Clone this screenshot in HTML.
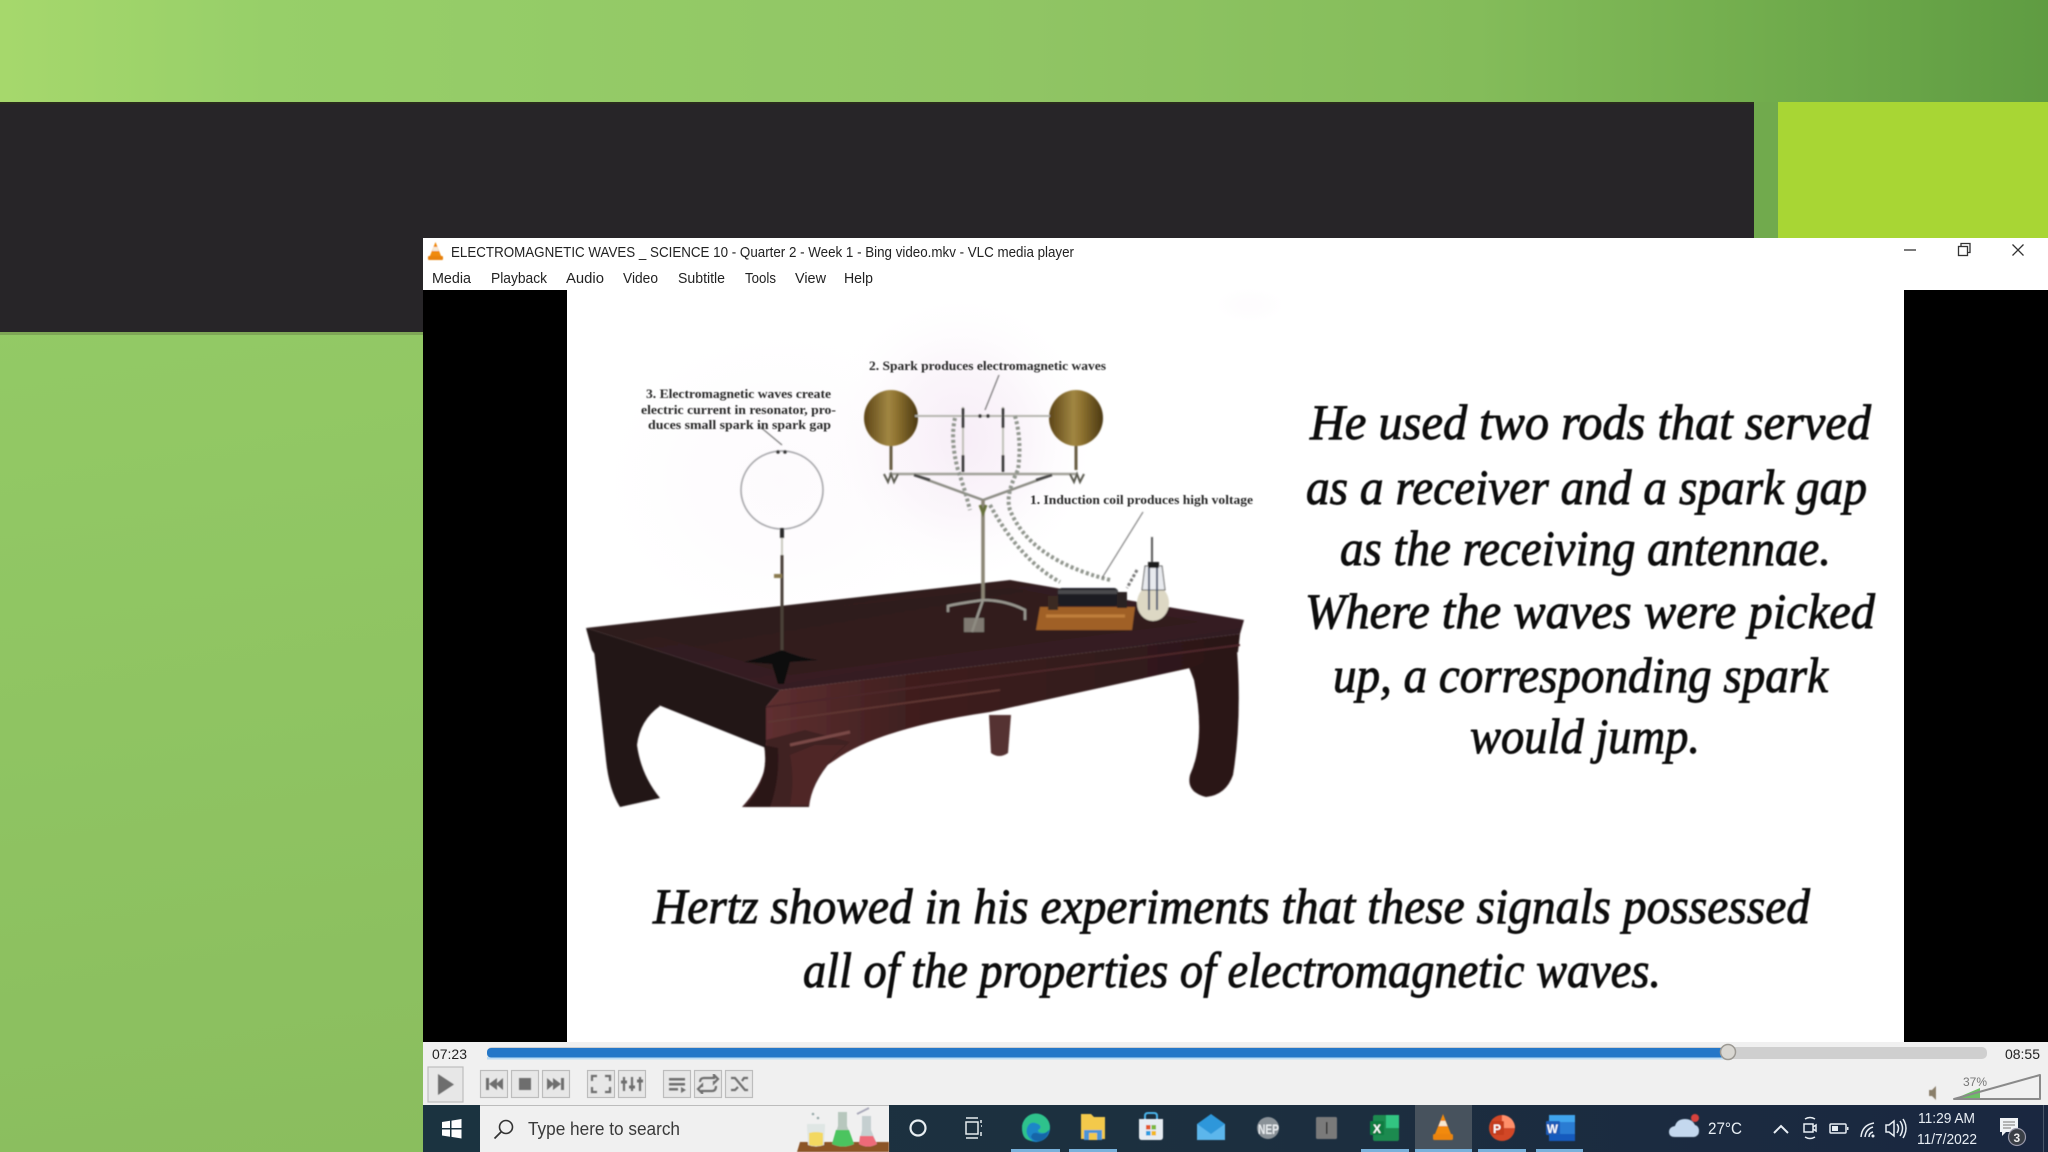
<!DOCTYPE html>
<html lang="en">
<head>
<meta charset="utf-8">
<title>VLC media player</title>
<style>
html,body{margin:0;padding:0;width:2048px;height:1152px;overflow:hidden;background:#90c864}
svg{display:block}
.ui{font-family:"Liberation Sans",sans-serif}
.sc{font-family:"Liberation Serif",serif;font-style:italic;fill:#111;stroke:#111;stroke-width:.9px;font-size:50px}
.lb{font-family:"Liberation Serif",serif;font-weight:bold;fill:#2a2a2a;font-size:12.5px}
</style>
</head>
<body>
<svg width="2048" height="1152" viewBox="0 0 2048 1152" xmlns="http://www.w3.org/2000/svg">
<defs>
<linearGradient id="top" x1="0" y1="0" x2="1" y2="0">
<stop offset="0" stop-color="#a6d86c"/><stop offset=".13" stop-color="#97cf69"/><stop offset=".5" stop-color="#90c564"/><stop offset=".72" stop-color="#84bc5a"/><stop offset=".85" stop-color="#73ae4e"/><stop offset="1" stop-color="#5f9c42"/>
</linearGradient>
<linearGradient id="left" x1="0" y1="0" x2="0.3" y2="1">
<stop offset="0" stop-color="#96ce68"/><stop offset="1" stop-color="#8abd5e"/>
</linearGradient>
<linearGradient id="tb" x1="0" y1="0" x2="1" y2="0">
<stop offset="0" stop-color="#1b3340"/><stop offset=".5" stop-color="#1c2f3f"/><stop offset="1" stop-color="#1a2740"/>
</linearGradient>
<linearGradient id="ball" x1="0" y1="0" x2="1" y2="0">
<stop offset="0" stop-color="#5c4416"/><stop offset=".45" stop-color="#a08642"/><stop offset=".6" stop-color="#8f7330"/><stop offset="1" stop-color="#4a3812"/>
</linearGradient>
<linearGradient id="ttop" x1="0" y1="0" x2="1" y2="1">
<stop offset="0" stop-color="#271a1b"/><stop offset=".6" stop-color="#371f22"/><stop offset="1" stop-color="#2a1a1b"/>
</linearGradient>
<linearGradient id="apr" x1="0" y1="0" x2="1" y2="0">
<stop offset="0" stop-color="#5f2f30"/><stop offset=".3" stop-color="#3f1f1f"/><stop offset="1" stop-color="#2a1718"/>
</linearGradient>
<radialGradient id="lil" cx=".5" cy=".5" r=".5">
<stop offset="0" stop-color="#f7edf7"/><stop offset=".5" stop-color="#fbf6fb"/><stop offset="1" stop-color="#fff" stop-opacity="0"/>
</radialGradient>
<filter id="b1" x="-5%" y="-5%" width="110%" height="110%"><feGaussianBlur stdDeviation=".7"/></filter>
<filter id="b2" x="-5%" y="-5%" width="110%" height="110%"><feGaussianBlur stdDeviation=".45"/></filter>
</defs>

<!-- slide background -->
<rect width="2048" height="1152" fill="url(#left)"/>
<rect width="2048" height="102" fill="url(#top)"/>
<rect x="1754" y="102" width="24" height="136" fill="#71aa4d"/>
<rect x="1778" y="102" width="270" height="136" fill="#a8d634"/>
<rect x="0" y="102" width="1754" height="230" fill="#272528"/>
<rect x="0" y="102" width="1754" height="2" fill="#2a2d1e"/>
<rect x="0" y="332" width="423" height="3" fill="#7ea656"/>

<!-- window -->
<rect x="423" y="238" width="1625" height="52" fill="#fff"/>
<rect x="423" y="290" width="1625" height="752" fill="#000"/>
<rect x="567" y="290" width="1337" height="752" fill="#fff"/>
<rect x="423" y="1042" width="1625" height="63" fill="#f0f0f0"/>

<!-- title icon -->
<g filter="url(#b2)">
<path d="M435.500 242l6 15h-12z" fill="#f08a10"/>
<path d="M433.500 247h4l1.300 4h-6.600z" fill="#f4e9d8"/>
<rect x="428" y="256" width="15" height="4" rx="1" fill="#e8820c"/>
</g>
<g class="ui" fill="#222" font-size="14.500">
<text x="451" y="257" textLength="623" lengthAdjust="spacingAndGlyphs">ELECTROMAGNETIC WAVES _ SCIENCE 10 - Quarter 2 - Week 1 - Bing video.mkv - VLC media player</text>
<text x="432" y="283" textLength="39" lengthAdjust="spacingAndGlyphs">Media</text>
<text x="491" y="283" textLength="56" lengthAdjust="spacingAndGlyphs">Playback</text>
<text x="566" y="283" textLength="38" lengthAdjust="spacingAndGlyphs">Audio</text>
<text x="623" y="283" textLength="35" lengthAdjust="spacingAndGlyphs">Video</text>
<text x="678" y="283" textLength="47" lengthAdjust="spacingAndGlyphs">Subtitle</text>
<text x="745" y="283" textLength="31" lengthAdjust="spacingAndGlyphs">Tools</text>
<text x="795" y="283" textLength="31" lengthAdjust="spacingAndGlyphs">View</text>
<text x="844" y="283" textLength="29" lengthAdjust="spacingAndGlyphs">Help</text>
</g>
<!-- window buttons -->
<g fill="none" stroke="#333" stroke-width="1.300">
<path d="M1904 250h12"/>
<rect x="1958.500" y="246.500" width="9" height="9"/>
<path d="M1961 246.500v-3h9v9h-2.500"/>
<path d="M2012.500 244.500l11 11M2023.500 244.500l-11 11"/>
</g>

<!-- video picture -->
<ellipse cx="960" cy="440" rx="140" ry="150" fill="url(#lil)"/>
<ellipse cx="780" cy="480" rx="200" ry="170" fill="url(#lil)" opacity=".25"/>
<ellipse cx="1250" cy="305" rx="40" ry="20" fill="url(#lil)" opacity=".2"/>
<g filter="url(#b1)">
<!-- back leg -->
<path d="M989 715h22l-3 38q-9 6-17 0z" fill="#553230"/>
<!-- left leg -->
<path d="M594 650L606 760Q609 790 620 807L660 798Q641 775 637 745Q640 720 660 706Z" fill="#241416"/>
<!-- right leg -->
<path d="M1237 650Q1242 720 1233 775Q1226 795 1206 797Q1186 792 1190 775Q1206 740 1194 680L1186 660Z" fill="#2a1719"/>
<!-- under front apron -->
<path d="M766 707L780 690L1240 634L1238 652L1190 668L990 712Q880 728 835 760L790 790L766 748Z" fill="url(#apr)"/>
<!-- front leg -->
<path d="M766 740Q772 775 742 807H809Q812 775 850 742L805 730Z" fill="#3f2022"/>
<path d="M764 745Q770 780 745 807H770Q780 780 778 748Z" fill="#2a1516"/>
<path d="M790 755Q795 780 790 805H809Q812 775 845 745L815 745Z" fill="#4f2728"/>
<!-- left apron -->
<path d="M586 628L780 690L766 707L766 748L646 700L600 662L592 650Z" fill="#211315"/>
<!-- top -->
<path d="M586 628L1010 580L1244 620L1240 634L780 690Z" fill="url(#ttop)"/>
<path d="M638 630L1010 588L1200 622L790 675Z" fill="#301a1d" opacity=".8"/>
<path d="M766 707L1240 645" stroke="#4e2829" stroke-width="2" fill="none"/>
<path d="M768 722L1000 690" stroke="#5e3432" stroke-width="2" fill="none"/>
<path d="M790 745L850 732" stroke="#7a4a46" stroke-width="3" fill="none"/>

<!-- ring -->
<ellipse cx="782" cy="490" rx="41" ry="39" fill="none" stroke="#9a9a9e" stroke-width="1.400"/>
<rect x="780" y="528" width="4" height="10" fill="#2a2a2a"/>
<path d="M782 538V680" stroke="#c9c9c0" stroke-width="2"/>
<path d="M782 555V680" stroke="#4a4038" stroke-width="3"/>
<rect x="774" y="574" width="8" height="4" fill="#8a7a50"/>
<path d="M744 662Q770 655 782 650Q800 658 818 660L790 662L784 684L778 684L772 664Z" fill="#0f0a0a"/>
<path d="M782 445L758 425" stroke="#555" stroke-width="1"/>
<circle cx="778" cy="452" r="1.800" fill="#333"/><circle cx="785" cy="452" r="1.800" fill="#333"/>

<!-- spark apparatus -->
<ellipse cx="891" cy="418" rx="27" ry="28" fill="url(#ball)"/>
<ellipse cx="1076" cy="418" rx="27" ry="28" fill="url(#ball)"/>
<path d="M915 416H1050" stroke="#b5b5ae" stroke-width="2"/>
<path d="M891 446V470M1076 446V470" stroke="#665b40" stroke-width="3"/>
<path d="M889 474H1077" stroke="#a0a098" stroke-width="2.500"/>
<path d="M884 474l4 8 3-8 3 8 4-8M1070 474l4 8 3-8 3 8 4-8" stroke="#5a5a50" stroke-width="2" fill="none"/>
<path d="M963 407V472M1003 407V472" stroke="#c0c0b8" stroke-width="2"/>
<path d="M963 408V428M1003 408V428M963 455V472M1003 455V472" stroke="#333" stroke-width="2.500"/>
<circle cx="980" cy="416" r="1.800" fill="#333"/><circle cx="988" cy="416" r="1.800" fill="#333"/>
<path d="M914 475L983 500L1052 475" fill="none" stroke="#8c8c84" stroke-width="2.500"/>
<path d="M914 475L930 480M1036 480L1052 475" stroke="#444" stroke-width="2.500"/>
<path d="M983 500V600" stroke="#8a8474" stroke-width="3.500"/>
<path d="M980 505l3 8 3-8" stroke="#66703a" stroke-width="3" fill="none"/>
<path d="M983 600Q955 604 948 606V612M983 600Q1005 600 1025 610V620M983 600L972 632" stroke="#9a9890" stroke-width="2.500" fill="none"/>
<rect x="964" y="618" width="20" height="14" fill="#8d8a80" opacity=".85"/>
<path d="M955 418Q950 440 958 470Q965 490 970 510" fill="none" stroke="#8f948c" stroke-width="4" stroke-dasharray="3 2.500"/>
<path d="M1015 416Q1022 440 1018 470Q1005 495 1010 510Q1030 560 1110 580" fill="none" stroke="#8f948c" stroke-width="4" stroke-dasharray="3 2.500"/>
<path d="M990 505Q1020 560 1060 582" fill="none" stroke="#8f948c" stroke-width="4" stroke-dasharray="3 2.500"/>
<!-- induction coil -->
<path d="M1040 607L1135 607L1132 630L1036 630Z" fill="#a06028"/>
<path d="M1046 616H1125" stroke="#c07f3a" stroke-width="3"/>
<rect x="1058" y="588" width="60" height="18" rx="4" fill="#1f1f22"/>
<rect x="1058" y="590" width="60" height="4" fill="#4a4a4e"/>
<rect x="1048" y="596" width="10" height="14" fill="#3b2a20"/>
<rect x="1117" y="592" width="10" height="16" fill="#2b2420"/>
<!-- leyden jar -->
<ellipse cx="1153" cy="603" rx="16" ry="18" fill="#ddd8c4"/>
<path d="M1145 566H1162L1165 590H1142Z" fill="#e8eaee" stroke="#555" stroke-width="1"/>
<path d="M1152 537V566" stroke="#555" stroke-width="2"/>
<rect x="1148" y="562" width="11" height="6" fill="#1a1a1a"/>
<path d="M1149 568V610M1157 568V610" stroke="#4a5670" stroke-width="2"/>
<path d="M1137 570L1127 588" stroke="#777" stroke-width="3" stroke-dasharray="3 2"/>
<!-- arrows -->
<path d="M999 375L985 410" stroke="#555" stroke-width="1"/>
<path d="M1143 512L1102 578" stroke="#666" stroke-width="1"/>
</g>
<g filter="url(#b2)">
<text class="lb" x="869" y="370" textLength="237" lengthAdjust="spacingAndGlyphs">2. Spark produces electromagnetic waves</text>
<text class="lb" x="646" y="398" textLength="185" lengthAdjust="spacingAndGlyphs">3. Electromagnetic waves create</text>
<text class="lb" x="641" y="414" textLength="195" lengthAdjust="spacingAndGlyphs">electric current in resonator, pro-</text>
<text class="lb" x="648" y="429" textLength="183" lengthAdjust="spacingAndGlyphs">duces small spark  in spark gap</text>
<text class="lb" x="1030" y="504" textLength="223" lengthAdjust="spacingAndGlyphs">1. Induction coil produces high voltage</text>
</g>
<g filter="url(#b2)">
<text class="sc" x="1310" y="439" textLength="561" lengthAdjust="spacingAndGlyphs">He used two rods that served</text>
<text class="sc" x="1306" y="504" textLength="561" lengthAdjust="spacingAndGlyphs">as a receiver and a spark gap</text>
<text class="sc" x="1340" y="565" textLength="491" lengthAdjust="spacingAndGlyphs">as the receiving antennae.</text>
<text class="sc" x="1305" y="628" textLength="570" lengthAdjust="spacingAndGlyphs">Where the waves were picked</text>
<text class="sc" x="1333" y="692" textLength="495" lengthAdjust="spacingAndGlyphs">up, a corresponding spark</text>
<text class="sc" x="1470" y="753" textLength="230" lengthAdjust="spacingAndGlyphs">would jump.</text>
<text class="sc" x="653" y="923" textLength="1157" lengthAdjust="spacingAndGlyphs">Hertz showed in his experiments that these signals possessed</text>
<text class="sc" x="803" y="987" textLength="858" lengthAdjust="spacingAndGlyphs">all of the properties of electromagnetic waves.</text>
</g>

<!-- seek -->
<g class="ui" fill="#222" font-size="13.500">
<text x="432" y="1059" textLength="35" lengthAdjust="spacingAndGlyphs">07:23</text>
<text x="2005" y="1059" textLength="35" lengthAdjust="spacingAndGlyphs">08:55</text>
</g>
<rect x="487" y="1047" width="1500" height="12" rx="5" fill="#cfcfcf"/>
<rect x="487" y="1057" width="1241" height="2.500" fill="#bcdcf4"/>
<rect x="487" y="1048" width="1241" height="9.500" rx="4" fill="#2477c8"/>
<circle cx="1728" cy="1052" r="7.500" fill="#d9d7d2" stroke="#9d9a94" stroke-width="1.500"/>

<!-- control buttons -->
<g fill="#e7e7e7" stroke="#bdbdbd" stroke-width="1.200">
<rect x="428" y="1067" width="35" height="35"/>
<rect x="480.500" y="1070.500" width="27" height="27"/>
<rect x="511.500" y="1070.500" width="27" height="27"/>
<rect x="542.500" y="1070.500" width="27" height="27"/>
<rect x="587.500" y="1070.500" width="27" height="27"/>
<rect x="618.500" y="1070.500" width="27" height="27"/>
<rect x="663.500" y="1070.500" width="27" height="27"/>
<rect x="694.500" y="1070.500" width="27" height="27"/>
<rect x="725.500" y="1070.500" width="27" height="27"/>
</g>
<g fill="#6e6e6e" filter="url(#b2)">
<path d="M438 1074l16 10.500-16 10.500z"/>
<path d="M486 1078h3v12h-3zM497 1078v12l-8-6zM503 1078v12l-7-6z"/>
<rect x="519" y="1078" width="12" height="12"/>
<path d="M547 1078v12l7-6zM553 1078v12l8-6zM561 1078h3v12h-3z"/>
<path d="M669 1078h16v2.500h-16zM669 1083h16v2.500h-16zM669 1088h9v2.500h-9zM681 1087l5 3-5 3z"/>
</g>
<g fill="none" stroke="#6e6e6e" stroke-width="2.200" filter="url(#b2)">
<path d="M592 1081v-5h5M605 1076h5v5M592 1087v5h5M610 1087v5h-5"/>
<path d="M624 1077v14M632 1077v14M640 1077v14"/>
<path d="M621 1082h6M629 1087h6M637 1081h6" stroke-width="3"/>
<path d="M700 1082q0-4 4-4h10v-3l4 4-4 4v-2M716 1086q0 5-4 5h-10v2l-4-4 4-4v2"/>
<path d="M731 1078l4 0 10 12h3M731 1090h4l3-3M742 1081l2-3h4"/>
</g>

<!-- volume -->
<path d="M1929 1090h3l4-4v14l-4-4h-3z" fill="#8a7f6a" filter="url(#b2)"/>
<path d="M1954 1099L1980 1088V1099Z" fill="#6cc065"/>
<path d="M1954 1099L2040 1075V1099Z" fill="none" stroke="#8a8a8a" stroke-width="2" stroke-linejoin="round"/>
<text class="ui" x="1963" y="1086" font-size="11.500" fill="#777" textLength="24" lengthAdjust="spacingAndGlyphs">37%</text>

<!-- taskbar -->
<rect x="423" y="1105" width="1625" height="47" fill="url(#tb)"/>
<rect x="480" y="1105" width="409" height="47" fill="#f0f0f0"/>
<rect x="480" y="1105" width="409" height="1" fill="#bcbcbc"/>
<!-- start -->
<path d="M442 1122l8-1.200v7.200h-8zM451.500 1120.600l10-1.600v9h-10zM442 1129.500h8v7.200l-8-1.200zM451.500 1129.500h10v9l-10-1.600z" fill="#fff"/>
<!-- search -->
<circle cx="506" cy="1127" r="6.500" fill="none" stroke="#333" stroke-width="1.600"/>
<path d="M501 1132l-6.500 6.500" stroke="#333" stroke-width="1.800"/>
<text class="ui" x="528" y="1135" font-size="18" fill="#3a3a3a" textLength="152" lengthAdjust="spacingAndGlyphs">Type here to search</text>
<!-- flasks -->
<g filter="url(#b2)">
<path d="M800 1142h89v10h-92z" fill="#8c5428"/>
<path d="M807 1124h18v3l-1 18q-8 3-16 0l-1-18z" fill="#dfe6e4"/>
<path d="M809 1133q7-2 14 0v12q-7 2-14 0z" fill="#f3d860"/>
<path d="M838 1112h9v14l7 18q-11 5-22 0l6-18z" fill="#b7c7bd"/>
<path d="M836 1130h13l5 14q-11 5-22 0z" fill="#4cc45e"/>
<path d="M862 1116h9v14l6 14q-9 5-18 0l3-14z" fill="#c5cfd0"/>
<path d="M860 1136h13l4 8q-9 5-18 0z" fill="#ee6a78"/>
<circle cx="813" cy="1114" r="1.300" fill="#9aa"/><circle cx="818" cy="1118" r="1.300" fill="#9aa"/>
<path d="M857 1114l12-6" stroke="#aab" stroke-width="2"/>
</g>
<!-- cortana, task view -->
<circle cx="918" cy="1128" r="7.500" fill="none" stroke="#e8eef2" stroke-width="2.200"/>
<g fill="none" stroke="#e6ecef" stroke-width="1.500">
<rect x="966" y="1122" width="12" height="12"/>
<path d="M966 1118h12M966 1138h12"/>
<path d="M981 1120v3M981 1126h1M981 1132v4"/>
</g>
<!-- vlc highlight -->
<rect x="1415" y="1105" width="57" height="47" fill="#47525d"/>
<!-- underlines -->
<g fill="#79b1db">
<rect x="1011" y="1149" width="49" height="3"/>
<rect x="1069" y="1149" width="48" height="3"/>
<rect x="1361" y="1149" width="48" height="3"/>
<rect x="1415" y="1149" width="57" height="3"/>
<rect x="1478" y="1149" width="48" height="3"/>
<rect x="1536" y="1149" width="47" height="3"/>
</g>
<g filter="url(#b2)">
<!-- edge -->
<g transform="translate(1 0)">
<circle cx="1035" cy="1128" r="14" fill="#1b86c8"/>
<path d="M1021 1128a14 14 0 0 1 28-1q0 6-7 6q-5 0-5-3q5-3 0-6q-8-4-11 4q-2 8 6 13q-11 0-11-13z" fill="#2ec28c"/>
<path d="M1036 1133q6 3 12-3q-2 9-9 11q-6 1-9-4q1-5 6-4z" fill="#1565a8"/>
</g>
<!-- explorer -->
<path d="M1081 1114h10l3 3h11v22h-24z" fill="#f3c94c"/>
<rect x="1084" y="1130" width="18" height="10" fill="#4b94d6"/>
<rect x="1089" y="1133" width="8" height="7" fill="#f3c94c"/>
<!-- store -->
<path d="M1139 1119h24v18q0 3-3 3h-18q-3 0-3-3z" fill="#e6ecf2"/>
<path d="M1145 1119v-3q0-3 3-3h6q3 0 3 3v3" fill="none" stroke="#4ab2e8" stroke-width="2"/>
<rect x="1146" y="1125" width="4.500" height="4.500" fill="#e3562c"/><rect x="1151.500" y="1125" width="4.500" height="4.500" fill="#7cb83c"/>
<rect x="1146" y="1131" width="4.500" height="4.500" fill="#2a9ce0"/><rect x="1151.500" y="1131" width="4.500" height="4.500" fill="#f2b824"/>
<!-- mail -->
<path d="M1197 1124l14-10 14 10v16h-28z" fill="#2d97da"/>
<path d="M1197 1124l14 10 14-10v16h-28z" fill="#5cb6ec"/>
<path d="M1201 1122l10-6 10 6-10 8z" fill="#2d97da"/>
<!-- NEP -->
<circle cx="1268" cy="1128" r="11" fill="#8a9298"/>
<text class="ui" x="1258" y="1134" font-size="14" font-weight="bold" fill="#e8ecef" textLength="21" lengthAdjust="spacingAndGlyphs">NEP</text>
<!-- I -->
<rect x="1316" y="1117" width="21" height="22" rx="1.500" fill="#7a7a7a"/>
<rect x="1326" y="1122" width="1.500" height="12" fill="#2c2c2c"/>
<!-- excel -->
<rect x="1373" y="1115" width="26" height="26" rx="2" fill="#1f8a50"/>
<rect x="1386" y="1115" width="13" height="13" fill="#33c481"/>
<rect x="1370" y="1121" width="14" height="14" rx="1" fill="#107c41"/>
<text class="ui" x="1373" y="1133" font-size="12" font-weight="bold" fill="#fff">X</text>
<!-- vlc -->
<path d="M1443 1114l8 20h-16z" fill="#f28a10"/>
<path d="M1440.500 1121h5l2 5h-9z" fill="#f5e7d2"/>
<rect x="1433" y="1134" width="20" height="6" rx="1.500" fill="#ec8410"/>
<!-- ppt -->
<g transform="translate(3 0)">
<circle cx="1499" cy="1128" r="13" fill="#d24726"/>
<path d="M1499 1115a13 13 0 0 1 13 13h-13z" fill="#ff8f6b"/>
<rect x="1488" y="1121" width="13" height="14" rx="1" fill="#c43e1c"/>
<text class="ui" x="1490" y="1133" font-size="12" font-weight="bold" fill="#fff">P</text>
</g>
<!-- word -->
<g transform="translate(1 0)">
<rect x="1548" y="1115" width="26" height="26" rx="2" fill="#2b7cd3"/>
<rect x="1548" y="1115" width="26" height="7" fill="#41a5ee"/>
<rect x="1548" y="1134" width="26" height="7" fill="#185abd"/>
<rect x="1545" y="1121" width="14" height="14" rx="1" fill="#1a5bb8"/>
<text class="ui" x="1546" y="1133" font-size="11.500" font-weight="bold" fill="#fff">W</text>
</g>
<!-- cloud -->
<path d="M1675 1137q-6 0-6-5t6-6q2-7 10-7q7 0 10 6q4 1 4 6t-5 6z" fill="#c4d8ee"/>
<circle cx="1695" cy="1118" r="4" fill="#d8423c"/>
</g>
<g class="ui" fill="#e8eef4">
<text x="1708" y="1134" font-size="17" textLength="34" lengthAdjust="spacingAndGlyphs">27°C</text>
<text x="1918" y="1123" font-size="15" textLength="57" lengthAdjust="spacingAndGlyphs">11:29 AM</text>
<text x="1917" y="1144" font-size="15" textLength="60" lengthAdjust="spacingAndGlyphs">11/7/2022</text>
</g>
<g fill="none" stroke="#e8eef4" stroke-width="1.500">
<path d="M1774 1133l7-7 7 7" stroke-width="2"/>
<path d="M1805 1119q5-3 10 0M1805 1137q5 3 10 0"/>
<rect x="1804" y="1124" width="9" height="8"/><path d="M1813 1127l3-2v6l-3-2"/>
<rect x="1830" y="1124" width="16" height="9" rx="1"/>
<path d="M1861 1137q1-12 13-14M1865 1137q1-8 8-10M1869 1137q0-4 4-5"/>
<path d="M1886 1125h3l5-4v15l-5-4h-3zM1897 1124q3 4 0 9M1900 1121q5 7 0 15M1903 1119q6 9 0 19"/>
</g>
<rect x="1832" y="1126" width="6" height="5" fill="#e8eef4"/>
<rect x="1847" y="1127" width="1.500" height="3" fill="#e8eef4"/>
<circle cx="1873" cy="1136" r="1.500" fill="#e8eef4"/>
<path d="M2000 1118h18v14h-12l-4 4v-4h-2z" fill="#f0f3f6"/>
<path d="M2003 1122h12M2003 1125h12M2003 1128h8" stroke="#777" stroke-width="1"/>
<circle cx="2017" cy="1137" r="8.500" fill="#3a3f46" stroke="#99a" stroke-width="1.200"/>
<text class="ui" x="2013.500" y="1142" font-size="12" fill="#eee" font-weight="bold">3</text>
<rect x="2043" y="1105" width="1" height="47" fill="#4a5668"/>
</svg>
</body>
</html>
